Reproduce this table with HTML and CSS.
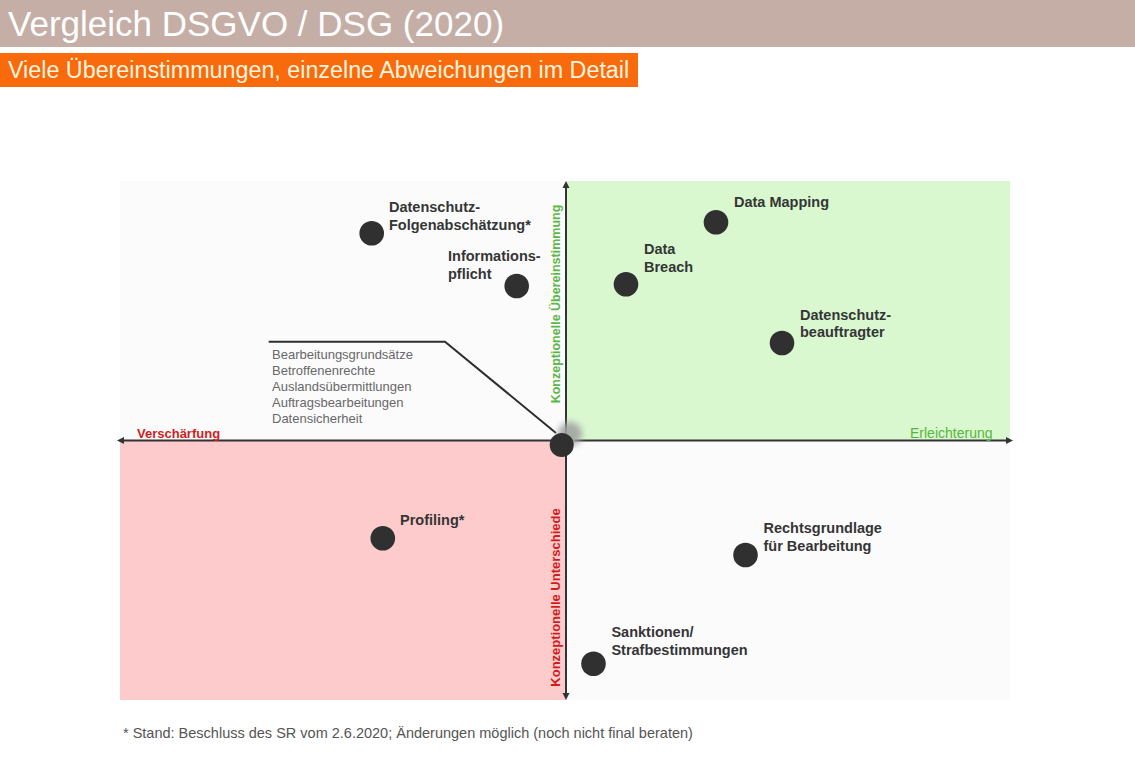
FILE: index.html
```html
<!DOCTYPE html>
<html lang="de">
<head>
<meta charset="utf-8">
<title>Vergleich DSGVO / DSG (2020)</title>
<link rel="stylesheet" href="styles.css">
</head>
<body>
<header class="title-bar">
  <h1 class="title">Vergleich DSGVO / DSG (2020)</h1>
</header>
<div class="subtitle">Viele Übereinstimmungen, einzelne Abweichungen im Detail</div>

<main class="chart-wrap">
  <svg class="chart" width="910" height="530" viewBox="110 175 910 530" xmlns="http://www.w3.org/2000/svg">
    <defs>
      <filter id="soft" x="-100%" y="-100%" width="300%" height="300%">
        <feGaussianBlur stdDeviation="3"/>
      </filter>
    </defs>
    <!-- quadrants -->
    <rect class="q-plain" x="120" y="181" width="446" height="259.5"/>
    <rect class="q-green" x="566" y="181" width="444" height="259.5"/>
    <rect class="q-red" x="120" y="440.5" width="446" height="259.5"/>
    <rect class="q-plain" x="566" y="440.5" width="444" height="259.5"/>

    <!-- axes -->
    <line class="axis" x1="122" y1="440.5" x2="1006" y2="440.5"/>
    <polygon class="arrow" points="117,440.5 124,437 124,444"/>
    <polygon class="arrow" points="1013,440.5 1006,437 1006,444"/>
    <line class="axis" x1="566" y1="186" x2="566" y2="695"/>
    <polygon class="arrow" points="566,181 562.5,188 569.5,188"/>
    <polygon class="arrow" points="566,700 562.5,693 569.5,693"/>

    <!-- axis labels -->
    <text class="ax-red" x="137" y="438">Verschärfung</text>
    <text class="ax-green-reg" x="910" y="437.7">Erleichterung</text>
    <text class="ax-green" transform="translate(559.5,403.3) rotate(-90)">Konzeptionelle Übereinstimmung</text>
    <text class="ax-red" transform="translate(559.5,686.7) rotate(-90)">Konzeptionelle Unterschiede</text>

    <!-- callout -->
    <polyline class="callout" points="268.7,341.7 445,341.7 556,433"/>
    <text class="list">
      <tspan x="272" y="359.3">Bearbeitungsgrundsätze</tspan>
      <tspan x="272" y="375.1">Betroffenenrechte</tspan>
      <tspan x="272" y="390.9">Auslandsübermittlungen</tspan>
      <tspan x="272" y="406.7">Auftragsbearbeitungen</tspan>
      <tspan x="272" y="422.5">Datensicherheit</tspan>
    </text>

    <!-- center dot -->
    <circle class="glow" cx="570" cy="434" r="12" filter="url(#soft)"/>
    <circle class="dot" cx="561.7" cy="445" r="12"/>

    <!-- points -->
    <circle class="dot" cx="371.7" cy="233.3" r="12.3"/>
    <text class="lbl"><tspan x="389" y="212.1">Datenschutz-</tspan><tspan x="389" y="229.5">Folgenabschätzung*</tspan></text>

    <circle class="dot" cx="516.7" cy="286" r="12.3"/>
    <text class="lbl"><tspan x="448" y="261.4">Informations-</tspan><tspan x="448" y="278.8">pflicht</tspan></text>

    <circle class="dot" cx="626" cy="284.3" r="12.3"/>
    <text class="lbl"><tspan x="644" y="254.4">Data</tspan><tspan x="644" y="272.1">Breach</tspan></text>

    <circle class="dot" cx="716" cy="222.3" r="12.3"/>
    <text class="lbl" x="734" y="207.1">Data Mapping</text>

    <circle class="dot" cx="782" cy="343" r="12.3"/>
    <text class="lbl"><tspan x="800" y="319.7">Datenschutz-</tspan><tspan x="800" y="337.2">beauftragter</tspan></text>

    <circle class="dot" cx="382.8" cy="538.3" r="12.3"/>
    <text class="lbl" x="400" y="524.7">Profiling*</text>

    <circle class="dot" cx="745.5" cy="555" r="12.3"/>
    <text class="lbl"><tspan x="763.5" y="533.1">Rechtsgrundlage</tspan><tspan x="763.5" y="551.1">für Bearbeitung</tspan></text>

    <circle class="dot" cx="593.5" cy="663.7" r="12.3"/>
    <text class="lbl"><tspan x="611.4" y="637.1">Sanktionen/</tspan><tspan x="611.4" y="654.7">Strafbestimmungen</tspan></text>
  </svg>
</main>

<p class="footnote">* Stand: Beschluss des SR vom 2.6.2020; Änderungen möglich (noch nicht final beraten)</p>
</body>
</html>
```

FILE: styles.css
```css
html, body {
  margin: 0;
  padding: 0;
  background: #ffffff;
  font-family: "Liberation Sans", Arial, sans-serif;
}

.title-bar {
  height: 47px;
  background: #c5aea6;
}

.title {
  margin: 0;
  padding-left: 8px;
  font-size: 35px;
  font-weight: normal;
  line-height: 47px;
  color: #ffffff;
  white-space: nowrap;
}

.subtitle {
  margin-top: 6px;
  width: 638px;
  height: 34px;
  box-sizing: border-box;
  padding-left: 8px;
  background: #f86a0c;
  color: #fff4de;
  font-size: 23.3px;
  line-height: 34px;
  white-space: nowrap;
}

.chart-wrap {
  margin: 88px 0 0 110px;
}

.chart {
  display: block;
}

.q-plain { fill: #fbfbfc; }
.q-green { fill: #d9f8d0; }
.q-red { fill: #fdcbcb; }

.axis {
  stroke: #333333;
  stroke-width: 2;
}

.arrow { fill: #333333; }

.callout {
  fill: none;
  stroke: #2e2e2e;
  stroke-width: 2;
}

.dot { fill: #303030; }
.glow { fill: #a3a3a3; opacity: 0.9; }

.lbl {
  font-family: "Liberation Sans", Arial, sans-serif;
  font-size: 14.5px;
  font-weight: bold;
  fill: #353535;
}

.list {
  font-family: "Liberation Sans", Arial, sans-serif;
  font-size: 13px;
  fill: #686868;
}

.ax-red {
  font-family: "Liberation Sans", Arial, sans-serif;
  font-size: 13px;
  font-weight: bold;
  fill: #cf1d1d;
}

.ax-green {
  font-family: "Liberation Sans", Arial, sans-serif;
  font-size: 12.5px;
  font-weight: bold;
  fill: #5bb847;
}

.ax-green-reg {
  font-family: "Liberation Sans", Arial, sans-serif;
  font-size: 14px;
  fill: #58b43f;
}

.footnote {
  margin: 20px 0 0 123px;
  font-size: 14.5px;
  line-height: 16px;
  color: #555555;
  white-space: nowrap;
}
```
